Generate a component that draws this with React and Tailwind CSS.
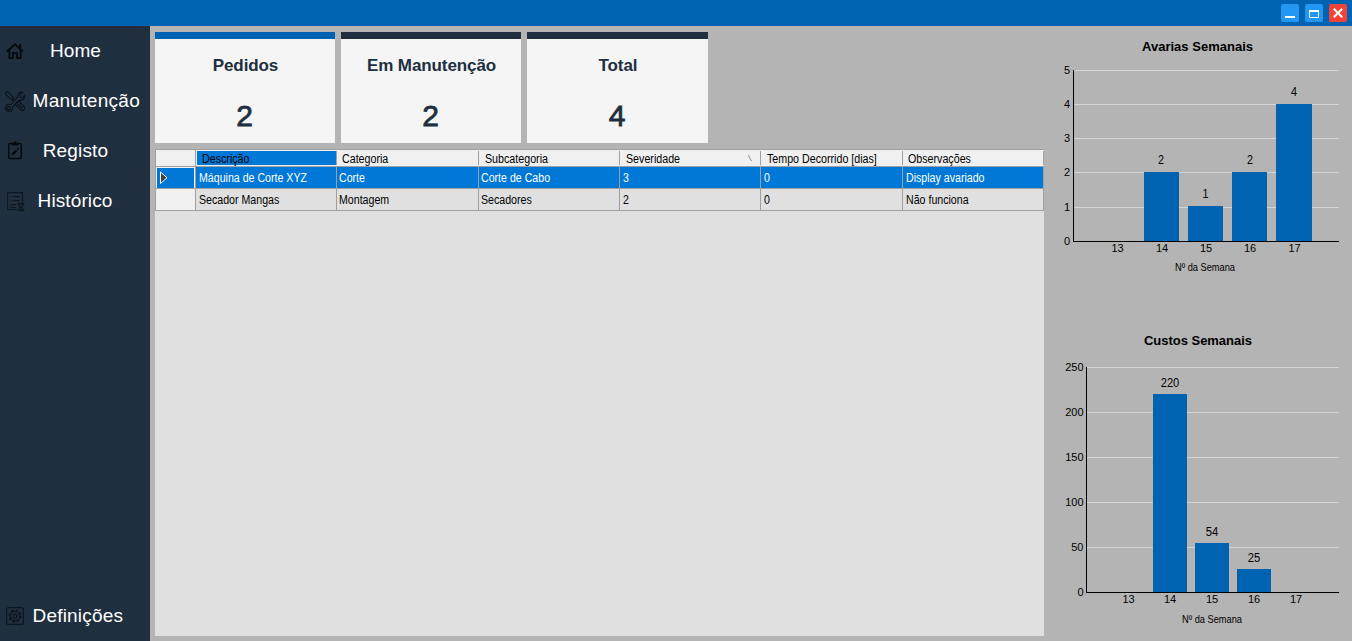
const navItems = [
  { label: 'Home', icon: HomeIcon, text: 'w-[151px] text-center tracking-[0.1px]' },
  { label: 'Manutenção', icon: ToolsIcon, text: 'pl-[32.5px] tracking-[0.3px]' },
  { label: 'Registo', icon: ClipboardIcon, text: 'w-[151px] text-center tracking-[0.15px]' },
  { label: 'Histórico', icon: HistoryIcon, text: 'w-[150px] text-center tracking-[0.1px]' },
];

function HomeIcon() {
  return (
    <svg width="30" height="30" viewBox="0 0 30 30" fill="none" stroke="#05090d" strokeWidth="1.8">
      <path d="M7 15.500 15 8.300l8 7.200" />
      <path d="M9.400 14v8.100h3.500v-5h4.200v5h3.500V14" />
      <path d="M20.200 12V8" />
    </svg>
  );
}

function ToolsIcon() {
  return (
    <svg width="30" height="30" viewBox="0 0 30 30" fill="none" stroke="#0a1118" strokeWidth="1.1" strokeLinejoin="round">
      <path d="M5.600 7.600c0-1.500 1.700-2.300 2.900-1.200l5.600 6.300-1.600 1.600-6.300-5.400c-.4-.4-.6-.8-.6-1.300Z" />
      <path d="m16.400 16.600 2.200-1.600 5.300 5.600c2 2.200-1 5.200-3.200 3.300l-5.400-5.600 1.100-1.700ZM17.800 18l4.500 4.600" />
      <path d="m22.800 6.200-3.100 3.200.8 1.900 2 .7 2.100-3c.8 3.300-1.700 5.900-4.900 5.200l-7.200 6.800c.7 2.500-1.300 4.600-3.500 4.500-4.800-.5-4.600-7 .1-7.200.9 0 1.300.2 1.900.2l6.500-7c-.7-3.200 2-6 5.300-5.300Z" />
      <circle cx="8.800" cy="21.900" r="1.700" />
    </svg>
  );
}

function ClipboardIcon() {
  return (
    <svg width="30" height="30" viewBox="0 0 30 30" fill="none" stroke="#05090d" strokeWidth="1.500">
      <rect x="8.700" y="7.500" width="12.600" height="15" rx="1.200" />
      <path d="M11.500 7h2V5.500h3V7h2v2.500h-7Z" fill="#05090d" stroke="none" />
      <path d="m12.200 18.600 4.400-4.400M17.300 13.500l1.200-1.200" strokeWidth="2.300" />
    </svg>
  );
}

function HistoryIcon() {
  return (
    <svg width="30" height="30" viewBox="0 0 30 30" fill="none" stroke="#0e161f" strokeWidth="1.200">
      <path d="M17 23.500H7.600V6.600h14.900v9.900" />
      <path d="M10 10.600h1.200M12.500 10.600h7.500M10 14.600h1.200M12.500 14.600h7.500M10 18.600h6M10 21.500h6" />
      <path d="M17.500 17.600h7M17.500 24.600h7M18.600 17.600c0 2.400 1.700 2.600 1.700 3.500s-1.700 1.200-1.700 3.500M23.400 17.600c0 2.400-1.700 2.600-1.700 3.500s1.700 1.200 1.700 3.500M20 23.500h2" />
    </svg>
  );
}

function SettingsIcon() {
  return (
    <svg width="30" height="30" viewBox="0 0 30 30" fill="none" stroke="#0d151d" strokeWidth="1.200">
      <rect x="6.600" y="6.600" width="16.800" height="16.800" rx="2" />
      <circle cx="15" cy="15" r="4.700" />
      <circle cx="15" cy="15" r="1.900" />
      <circle cx="15" cy="15" r="5.900" strokeWidth="1.500" strokeDasharray="2.300 2.333" />
    </svg>
  );
}

function NavButton({ label, icon: Icon, text }) {
  return (
    <button className="flex h-[50px] w-[150px] items-center text-left text-[19px] text-white">
      <span className="-mr-[30px] block w-[30px] shrink-0">
        <Icon />
      </span>
      <span className={`block shrink-0 whitespace-nowrap leading-[22px] ${text}`}>{label}</span>
    </button>
  );
}

function WindowButtons() {
  return (
    <div className="flex gap-[6px] pr-[5px] pt-1">
      <svg width="18" height="18" viewBox="0 0 18 18">
        <rect width="18" height="18" rx="2" fill="#2196f3" />
        <path d="M4 12h10v2H4Z" fill="#fff" />
      </svg>
      <svg width="18" height="18" viewBox="0 0 18 18">
        <rect width="18" height="18" rx="2" fill="#2196f3" />
        <path d="M4.500 7v6.500h9V7" fill="none" stroke="#fff" />
        <path d="M4 6h10v2H4Z" fill="#fff" />
      </svg>
      <svg width="18" height="18" viewBox="0 0 18 18">
        <rect width="18" height="18" rx="2" fill="#f44336" />
        <path d="m4.800 4.800 8.400 8.400m0-8.400-8.400 8.400" fill="none" stroke="#fff" strokeWidth="2" />
      </svg>
    </div>
  );
}

const cards = [
  { title: 'Pedidos', value: 2, style: 'w-[180px] border-[#0063b1]' },
  { title: 'Em Manutenção', value: 2, style: 'w-[180px] border-[#202f40]' },
  { title: 'Total', value: 4, style: 'w-[181px] border-[#202f40]' },
];

function Card({ title, value, style }) {
  return (
    <div className={`flex h-[111px] flex-col items-center border-t-[7px] bg-[#f5f5f5] text-[#202f40] ${style}`}>
      <div className="mt-[17px] whitespace-nowrap pl-px text-[17px] font-bold leading-[20px] tracking-[-0.1px]">{title}</div>
      <div className="mt-[22px] pr-px text-[30px] leading-[36px] [-webkit-text-stroke:0.8px_#202f40]">{value}</div>
    </div>
  );
}

const headers = ['Descrição', 'Categoria', 'Subcategoria', 'Severidade', 'Tempo Decorrido [dias]', 'Observações'];
const rows = [
  ['Máquina de Corte XYZ', 'Corte', 'Corte de Cabo', '3', '0', 'Display avariado'],
  ['Secador Mangas', 'Montagem', 'Secadores', '2', '0', 'Não funciona'],
];
const columns = 'grid grid-cols-[40px_141px_142px_141px_141px_142px_141px]';
const headerPadding = ['pl-[5px]', 'pl-[5px]', 'pl-[6px]', 'pl-[6px]', 'pl-[6px]', 'pl-[5px]'];
const cellPadding = ['pl-[3px]', 'pl-[2px]', 'pl-[2px]', 'pl-[3px]', 'pl-[3px]', 'pl-[3px]'];

function DataTable() {
  return (
    <div className="mt-[6px] h-[487px] w-[889px] bg-[#e0e0e0] text-[12px] leading-[16px] text-black">
      <div className="border-l border-t border-[#a0a0a0]">
        <div className={`${columns} h-[17px] border-b border-[#a0a0a0] bg-[#f0f0f0]`}>
          <div className="border-r border-[#a0a0a0]" />
          {headers.map((h, i) => (
            <div key={h} className={`flex py-px ${i === 0 ? 'pl-px' : ''}`}>
              <div
                className={`flex flex-1 items-center justify-between whitespace-nowrap border-r border-[#a0a0a0] leading-[14px] ${headerPadding[i]} ${
                  i === 0 ? 'bg-[#0078d7]' : ''
                }`}
              >
                <span className="inline-block origin-left translate-y-px scale-x-[0.89]">{h}</span>
                {i === 3 && (
                  <svg className="mr-[7px]" width="6" height="8" viewBox="0 0 6 8" fill="none" stroke="#a0a0a0">
                    <path d="M1 1.500h1v2h1v2h1v1h1" />
                  </svg>
                )}
              </div>
            </div>
          ))}
        </div>
        {rows.map((row, r) => (
          <div key={row[0]} className={`${columns} h-[22px] ${r === 0 ? 'bg-[#0078d7] text-white' : ''}`}>
            <div className="border-b border-r border-[#a0a0a0] bg-[#f0f0f0] pl-px pt-px">
              {r === 0 && (
                <div className="mr-px h-[20px] bg-[#0078d7]">
                  <svg width="14" height="20" viewBox="0 0 14 20">
                    <path d="M3.500 4v11.500l6.500-5.750Z" fill="#404040" stroke="#fff" />
                  </svg>
                </div>
              )}
            </div>
            {row.map((cell, c) => (
              <div key={c} className={`whitespace-nowrap border-b border-r border-[#a0a0a0] pt-[3px] ${cellPadding[c]}`}>
                <span className="inline-block origin-left scale-x-[0.885]">{cell}</span>
              </div>
            ))}
          </div>
        ))}
      </div>
    </div>
  );
}

const failures = {
  title: 'Avarias Semanais', titleY: 51, titleX: 1142, titleW: 111, top: 26, height: 294,
  axisX: 1073, axisTop: 70, base: 241, labelX: 1070, valueGap: 8,
  ticks: [[5, 70], [4, 104], [3, 138], [2, 172], [1, 207], [0, 241]],
  bars: [
    { x: 1144, w: 35, y: 172, value: 2, vx: 1161, vw: 6 },
    { x: 1188, w: 35, y: 206, value: 1, vx: 1205.5, vw: 6 },
    { x: 1232, w: 35, y: 172, value: 2, vx: 1250, vw: 6 },
    { x: 1276, w: 36, y: 104, value: 4, vx: 1294, vw: 6 },
  ],
  weeks: [[13, 1117.5], [14, 1162], [15, 1206], [16, 1250], [17, 1294.5]],
  weekY: 252, captionX: 1175, captionY: 271,
};

const costs = {
  title: 'Custos Semanais', titleY: 345, titleX: 1144, titleW: 108, top: 320, height: 321,
  axisX: 1086, axisTop: 367, base: 592, labelX: 1083.5, valueGap: 7.5,
  ticks: [[250, 367], [200, 412], [150, 457], [100, 502], [50, 547], [0, 592]],
  bars: [
    { x: 1153, w: 34, y: 394, value: 220, vx: 1170, vw: 18.5 },
    { x: 1195, w: 34, y: 543, value: 54, vx: 1212, vw: 12.5 },
    { x: 1237, w: 34, y: 569, value: 25, vx: 1254, vw: 12.5 },
  ],
  weeks: [[13, 1128.5], [14, 1170], [15, 1212], [16, 1254], [17, 1296]],
  weekY: 603, captionX: 1182, captionY: 623,
};

function BarChart({ data: d }) {
  return (
    <svg width="308" height={d.height} viewBox={`1044 ${d.top} 308 ${d.height}`} className="block shrink-0" fontSize="11" fill="#000">
      <text x={d.titleX} y={d.titleY} fontSize="13" fontWeight="700" textLength={d.titleW}>{d.title}</text>
      {d.ticks.map(([label, y]) => (
        <g key={label}>
          {label !== 0 && <rect x={d.axisX} y={y} width={1339 - d.axisX} height="1" fill="#d3d3d3" />}
          <text x={d.labelX} y={y + 4} textAnchor="end">{label}</text>
        </g>
      ))}
      {d.bars.map((b) => (
        <g key={b.x}>
          <rect x={b.x} y={b.y} width={b.w} height={d.base - b.y} fill="#0063b1" />
          <text x={b.vx} y={b.y - d.valueGap} textAnchor="middle" fontSize="12" textLength={b.vw} lengthAdjust="spacingAndGlyphs">{b.value}</text>
        </g>
      ))}
      <rect x={d.axisX} y={d.axisTop} width="1" height={d.base - d.axisTop} />
      <rect x={d.axisX} y={d.base} width={1339 - d.axisX} height="1" />
      {d.weeks.map(([week, x]) => (
        <text key={week} x={x} y={d.weekY} textAnchor="middle">{week}</text>
      ))}
      <text x={d.captionX} y={d.captionY} fontSize="11" textLength="60" lengthAdjust="spacingAndGlyphs">Nº da Semana</text>
    </svg>
  );
}

export default function App() {
  return (
    <div className="flex h-[641px] w-[1352px] flex-col overflow-hidden bg-[#b4b4b4] font-['Liberation_Sans',Arial,sans-serif]">
      <header className="flex h-[26px] shrink-0 justify-end bg-[#0063b1]">
        <WindowButtons />
      </header>
      <div className="flex flex-1">
        <nav className="flex w-[150px] shrink-0 flex-col bg-[#202f40]">
          {navItems.map((item) => (
            <NavButton key={item.label} {...item} />
          ))}
          <div className="mt-auto">
            <NavButton label="Definições" icon={SettingsIcon} text="pl-[32.5px] tracking-[0.2px]" />
          </div>
        </nav>
        <main className="w-[894px] shrink-0 pl-[5px] pt-[6px]">
          <div className="flex gap-[6px]">
            {cards.map((card) => (
              <Card key={card.title} {...card} />
            ))}
          </div>
          <DataTable />
        </main>
        <aside className="flex w-[308px] flex-col">
          <BarChart data={failures} />
          <BarChart data={costs} />
        </aside>
      </div>
    </div>
  );
}
